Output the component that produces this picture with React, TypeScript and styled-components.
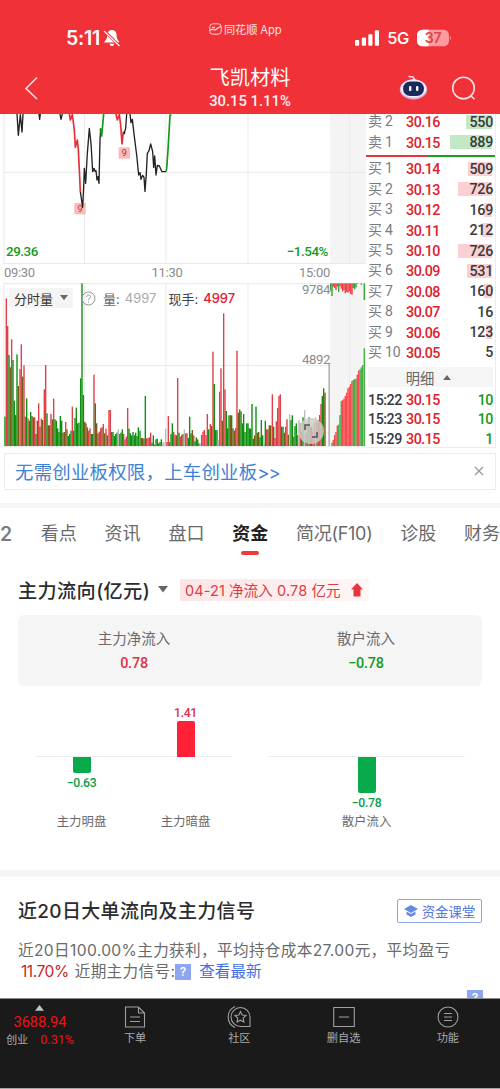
import React from 'react';
import styled, { createGlobalStyle, css } from 'styled-components';

const RED = '#e0202c';
const GREEN = '#159a1c';
const num = css`font-family: Roboto, 'Noto Sans CJK SC', sans-serif;`;

const Global = createGlobalStyle`
  * { box-sizing: border-box; }
  body { margin: 0; background: #fff; }
`;

const Screen = styled.div`
  width: 500px;
  height: 1089px;
  overflow: hidden;
  background: #fff;
  color: #333;
  font-family: Inter, 'Noto Sans CJK SC', sans-serif;
  display: flex;
  flex-direction: column;
  border-bottom: 1px solid #a5a5a5;
  white-space: nowrap;
`;

/* ---------- header ---------- */
const Header = styled.header`
  flex: none;
  height: 114px;
  background: #f13138;
  color: #fff;
`;
const StatusBar = styled.div`
  height: 57px;
  padding: 19px 47px 0 66px;
  display: grid;
  grid-template-columns: 143px 1fr 98px;
`;
const Clock = styled.div`
  display: flex;
  gap: 3px;
  height: 37px;
  align-items: center;
  font-size: 19.6px;
  font-weight: 600;
  letter-spacing: -0.3px;
`;
const AppName = styled.div`
  display: flex;
  gap: 2px;
  height: 20px;
  align-items: center;
  font-size: 11.2px;
  letter-spacing: -0.1px;
  color: #ffe0df;
`;
const Signals = styled.div`
  display: flex;
  height: 37px;
  align-items: center;
  gap: 8px;
  font-size: 16.5px;
  font-weight: 500;
  letter-spacing: -0.3px;
`;
const TitleBar = styled.div`
  height: 57px;
  padding: 0 24px;
  display: grid;
  grid-template-columns: 1fr 86px 1fr;
`;
const BackSlot = styled.div`
  padding-top: 19px;
`;
const StockTitle = styled.div`
  text-align: center;
  strong {
    display: block;
    font-weight: 400;
    font-size: 20.2px;
    line-height: 41px;
  }
  span {
    ${num}
    display: block;
    font-size: 14.8px;
    font-weight: 500;
    line-height: 16px;
    margin-top: -5px;
    color: #fff0f0;
  }
`;
const HeadTools = styled.div`
  display: flex;
  justify-content: flex-end;
  gap: 22px;
  padding-top: 17px;
`;

/* ---------- quote area ---------- */
const Quote = styled.section`
  flex: none;
  height: 335px;
  display: flex;
`;
const Charts = styled.div`
  width: 366px;
  flex: none;
`;
const Pane = styled.div<{ $h: number }>`
  position: relative;
  height: ${p => p.$h}px;
  svg { display: block; }
`;
const RangeRow = styled.div`
  position: absolute;
  left: 6px;
  right: 38px;
  bottom: 2px;
  display: flex;
  justify-content: space-between;
  ${num}
  font-weight: 500;
  font-size: 13.4px;
  letter-spacing: -0.45px;
  line-height: 20px;
  color: ${GREEN};
`;
const TimeRow = styled.div`
  height: 19px;
  padding: 0 36px 0 4px;
  display: grid;
  grid-template-columns: 1fr 1fr 1fr;
  ${num}
  font-size: 13px;
  letter-spacing: -0.3px;
  line-height: 18px;
  color: #8b8b8f;
  span:nth-child(2) { text-align: center; }
  span:nth-child(3) { text-align: right; }
`;
const VolumeBar = styled.div`
  position: absolute;
  left: 9px;
  top: 5px;
  height: 20px;
  display: flex;
  align-items: center;
  font-size: 13px;
  color: #555;
`;
const VolumeSelect = styled.span`
  display: flex;
  align-items: center;
  gap: 7px;
  height: 20px;
  width: 64px;
  padding-left: 5px;
  border-radius: 2px;
  background: rgba(243, 243, 244, 0.95);
  margin-right: 8px;
  color: #333;
`;
const VolText = styled.span<{ $c: string; $ml?: number; $b?: boolean }>`
  color: ${p => p.$c};
  margin-left: ${p => p.$ml ?? 0}px;
  font-weight: ${p => (p.$b ? 500 : 400)};
`;
const Scale = styled.div<{ $top: number }>`
  position: absolute;
  right: 36px;
  top: ${p => p.$top}px;
  ${num}
  font-size: 13.2px;
  letter-spacing: -0.4px;
  line-height: 14px;
  color: #8b8b8f;
`;
const Expand = styled.div`
  position: absolute;
  left: 298px;
  top: 135px;
  width: 26px;
  height: 26px;
  border-radius: 50%;
  background: rgba(205, 205, 200, 0.82);
  display: grid;
  place-items: center;
`;

/* ---------- order book ---------- */
const Book = styled.div`
  width: 130px;
  flex: none;
  padding-left: 2px;
  border-right: 1px solid #ececec;
  border-bottom: 1px solid #ececec;
  height: 334px;
  overflow: hidden;
`;
const BookRows = styled.div`
  margin-top: -2px;
`;
const Level = styled.div`
  height: 20.4px;
  display: flex;
  align-items: center;
  ${num}
  font-size: 14.3px;
  font-weight: 500;
  color: #3a3a3e;
`;
const LevelName = styled.span`
  width: 38px;
  height: 20px;
  line-height: 18px;
  font-size: 14px;
  font-weight: 400;
  color: #7b7b7f;
  letter-spacing: -0.2px;
`;
const Price = styled.span`
  width: 36px;
  color: ${RED};
  letter-spacing: -0.5px;
`;
const Depth = styled.span<{ $w: number; $c: string }>`
  flex: 1;
  margin-right: 2px;
  height: 15px;
  line-height: 15px;
  text-align: right;
  letter-spacing: -0.3px;
  background: linear-gradient(${p => p.$c}, ${p => p.$c}) no-repeat right 1px top 0 / ${p => p.$w}px 14px;
`;
const Split = styled.div`
  height: 2px;
  margin: 2px 0 2.5px -2px;
  width: 129px;
  background: linear-gradient(90deg, #e5323b 48%, #17a020 48%);
`;
const DetailHead = styled.div`
  height: 20px;
  margin: 4px 2px 3px 0;
  padding-right: 4px;
  background: #f5f5f6;
  display: flex;
  align-items: center;
  justify-content: center;
  gap: 9px;
  font-size: 14.3px;
  color: #666;
`;
const Trade = styled.div`
  height: 19.4px;
  display: flex;
  align-items: center;
  ${num}
  font-size: 14.3px;
  font-weight: 500;
  color: #3a3a3e;
  letter-spacing: -0.5px;
  > span:first-child { width: 38px; }
  > span:last-child { flex: 1; text-align: right; margin-right: 2px; color: ${GREEN}; }
`;

/* ---------- banner & tabs ---------- */
const Banner = styled.div`
  flex: none;
  margin: 4px 4px 0;
  height: 37px;
  border: 1.5px solid #ececef;
  padding: 0 11px 1px 10px;
  display: flex;
  align-items: center;
  justify-content: space-between;
  font-size: 18.4px;
  letter-spacing: 0.25px;
  color: #3f82d4;
`;
const More = styled.span`
  letter-spacing: -1px;
`;
const Gap = styled.div<{ $mt: number; $h: number }>`
  flex: none;
  margin-top: ${p => p.$mt}px;
  height: ${p => p.$h}px;
  background: #f5f5f6;
`;
const Tabs = styled.nav`
  flex: none;
  height: 52px;
  display: flex;
  gap: 27.8px;
  line-height: 52px;
  font-size: 18px;
  color: #6a6a6c;
`;
const Tab = styled.span<{ $on?: boolean; $tight?: boolean }>`
  flex: none;
  height: 47px;
  position: relative;
  ${p => p.$tight && css`letter-spacing: -0.28px;`}
  ${p => p.$on && css`
    color: #222;
    font-weight: 700;
    &::after {
      content: '';
      position: absolute;
      left: 9px;
      bottom: 0;
      width: 18px;
      height: 4px;
      border-radius: 2px;
      background: #f13a38;
    }
  `}
`;
const ClippedTab = styled(Tab)`
  width: 13px;
  font-weight: 600;
  font-size: 19.5px;
  color: #7c7c7e;
`;

/* ---------- fund flow ---------- */
const FlowHead = styled.div`
  flex: none;
  height: 55px;
  padding: 11px 0 7px 18px;
  display: flex;
  align-items: center;
`;
const FlowTitle = styled.h2`
  margin: 0;
  width: 131px;
  font-size: 19.2px;
  letter-spacing: 0.35px;
  font-weight: 500;
  color: #2c2c2e;
  margin-right: 9px;
`;
const FlowTag = styled.div`
  margin-left: 12px;
  width: 189px;
  height: 22px;
  padding-left: 5px;
  display: flex;
  align-items: center;
  gap: 10px;
  background: linear-gradient(90deg, #fde5e6, #fff6f6);
  color: #df3c43;
  font-size: 14.5px;
  letter-spacing: 0.1px;
`;
const Summary = styled.div`
  flex: none;
  margin: 0 18px;
  height: 71px;
  border-radius: 6px;
  background: #f5f5f6;
  display: grid;
  grid-template-columns: 1fr 1fr;
  text-align: center;
  padding-top: 12px;
`;
const SummaryCell = styled.div<{ $c: string }>`
  font-size: 14.5px;
  line-height: 23px;
  color: #6a6a6c;
  b {
    ${num}
    display: block;
    font-size: 14.4px;
    letter-spacing: -0.2px;
    font-weight: 500;
    line-height: 28px;
    color: ${p => p.$c};
  }
`;
const BarChart = styled.div`
  flex: none;
  height: 184px;
  display: flex;
  padding: 0 35px;
  justify-content: space-between;
`;
const BarGroup = styled.div`
  width: 197px;
  display: flex;
  justify-content: center;
  background: linear-gradient(#eee, #eee) no-repeat 0 70px / 100% 1px;
`;
const BarItem = styled.div`
  flex: none;
  width: 104px;
  display: grid;
  grid-template-rows: 71px 55px 20px;
  justify-items: center;
  font-size: 12.4px;
  color: #6a6a6c;
  line-height: 20px;
`;
const BarHalf = styled.div<{ $up?: boolean; $c: string }>`
  display: flex;
  flex-direction: column;
  align-items: center;
  justify-content: ${p => (p.$up ? 'flex-end' : 'flex-start')};
  ${num}
  font-size: 12.2px;
  letter-spacing: -0.3px;
  font-weight: 500;
  line-height: ${p => (p.$up ? 16 : 21)}px;
  color: ${p => p.$c};
`;
const Bar = styled.i<{ $h: number; $up?: boolean }>`
  flex: none;
  width: 18px;
  height: ${p => p.$h}px;
  background: ${p => (p.$up ? '#ff2236' : '#08aa4c')};
  border-radius: ${p => (p.$up ? '2px 2px 0 0' : '0 0 2px 2px')};
`;

/* ---------- signals ---------- */
const SignalSection = styled.section`
  flex: none;
  height: 122px;
  padding: 21px 18px 0 18px;
  overflow: hidden;
  border-bottom: 1px solid #8b8b8b;
`;
const SignalHead = styled.div`
  display: flex;
  justify-content: space-between;
  align-items: center;
  height: 25px;
  h2 { margin: -3px 0 0; font-size: 19px; letter-spacing: 0.33px; font-weight: 500; color: #2c2c2e; }
`;
const ClassButton = styled.button`
  width: 85px;
  height: 24px;
  padding: 0;
  border: 1px solid #8ba4e6;
  border-radius: 2px;
  background: #fff;
  display: flex;
  align-items: center;
  justify-content: center;
  gap: 4px;
  font: 13.4px 'Noto Sans CJK SC', sans-serif;
  color: #5578dd;
`;
const Summary20 = styled.p`
  margin: 18px 0 0;
  font-size: 15.6px;
  letter-spacing: 0.36px;
  line-height: 20.5px;
  color: #6a6a6c;
`;
const Line = styled.span`
  display: flex;
  align-items: center;
  height: 20.5px;
  em { font-style: normal; color: #c81f28; margin: 0 6px 0 3px; letter-spacing: -0.5px; }
  a { color: #3f6fe8; margin-left: 8px; letter-spacing: 0; }
`;
const HelpBadge = styled.span`
  flex: none;
  width: 16px;
  height: 16px;
  background: #8ea6f2;
  color: #fff;
  font-size: 12px;
  font-weight: 600;
  line-height: 16px;
  text-align: center;
`;
const TrailingRow = styled.div`
  display: flex;
  justify-content: flex-end;
  margin: 8px -1px 0 0;
`;

/* ---------- bottom bar ---------- */
const BottomBar = styled.footer`
  flex: 1;
  background: #1a1a1a;
  color: #a9a9a9;
  display: flex;
`;
const IndexBox = styled.div`
  width: 83px;
  padding-top: 6px;
  display: flex;
  flex-direction: column;
  align-items: center;
  padding-right: 3px;
  ${num}
  color: #ee1118;
  b { font-size: 14.8px; font-weight: 400; line-height: 20px; margin-top: 1px; letter-spacing: -0.1px; }
  div { display: flex; gap: 12px; font-size: 12.6px; line-height: 15px; }
  small { font-size: 11.2px; color: #a9a9a9; line-height: 17px; }
`;
const NavItem = styled.div`
  width: 104.3px;
  padding-top: 7px;
  display: flex;
  flex-direction: column;
  align-items: center;
  font-size: 11.2px;
  line-height: 17px;
  svg { margin-bottom: 2px; }
`;

type Hue = 'r' | 'g' | 'b' | 'y';
const HUES: Record<Hue, string> = { r: '#df4148', g: '#109010', b: '#7d5c18', y: '#bdbdbd' };

/* Minute volumes: x position, colour key, bar top (three units per pixel). */
const VOLUME =
  '15g410 19r55 23r138 27g225 31b262 35r178 39g240 43g362 47g405 51g223 55b318 60r267 64r193 68b290 72r256 76r410 80g355 84r415 88b422 92g396 96b408 100b412 104r412 108g462 112b422 116r370 120b440 124r416 128b420 133r328 137r255 141g400 145b436 149b436 153r402 157b418 161r356 165g418 169g422 173g445 177g456 181g408 185g422 189b458 193b456 197r426 201b448 205g468 209g462 213g452 217r380 221b452 225g414 229g383 233g430 237g428 242g295 246g10 250g345 254b425 258b430 262b442 266r452 270r445 274g462 278g462 282r284 286g370 290b430 294b460 298r455 302r445 306b442 310r432 314b460 318r446 322g466 327r390 331r390 335b456 339g456 343g468 347g462 351g458 355y448 359r462 363g458 367g448 371r462 375r478 379r470 383r384 387g446 391g460 395g466 399g456 403g466 407g458 411g468 415g442 420g452 424b474 428b474 432b476 436g348 440r475 444r474 448r472 452r458 456g488 460g466 464g494 468g478 472g476 476g490 480g486 484g478 488y488 492y486 497y446 501r486 505r408 509r486 513g462 517g430 521r456 525r464 529b466 533r294 537g458 541r470 545r465 549b462 553y448 557r460 561r460 565g474 569g410 573g460 577b450 581r466 585g484 589g472 593g478 597g490 601y490 605r465 609r455 613r450 618r465 622r402 626g448 631r432 635b438 639r215 643g312 647g450 651g450 655y480 659r335 663r265 667b422 671r100 675r328 679g393 683g445 687g406 691b406 695g406 699b445 703b452 707r444 711r212 715b398 719b388 723g394 727g430 731g402 735g456 740g430 744g430 748g445 752g446 756g372 760g476 764b466 768g380 772b458 776b456 780g472 784g420 788g466 792y490 796g422 800r448 804b448 808b436 812b436 817r343 821g440 825r474 829r424 833r384 837r348 841r343 845g440 849g440 853b458 857r440 861r418 865b464 869y402 873g420 877g406 881r470 885g438 889g430 893r465 897y420 901r430 905g455 909g412 914y390 918g460 922r430 927g412 931r440 935g440 939r455 943r430 947y412 951g425 955r420 959r405 963r372 967g348 971g325 975b338';

const parse = (s: string) =>
  s.split(' ').map(t => {
    const m = /^(\d+)([rgby])(\d+)$/.exec(t)!;
    return { x: +m[1], hue: m[2] as Hue, top: +m[3] };
  });

const AUCTION =
  '996g488 1000r480 1004r465 1008r456 1012r437 1016g434 1020g405 1024g363 1028r360 1032r356 1036r348 1040r338 1044r325 1048r320 1052r312 1056r303 1060g300 1064g297 1068g296 1072r284 1076r272 1080g268 1084g262 1088g255 1093g205';
const AUCTION_TOP =
  '992g32 996g48 1000r20 1004r24 1008r30 1012r20 1016g36 1020r18 1024r26 1028r34 1032r30 1036r40 1040r36 1044r38 1048r34 1052r42 1056r44 1060g24 1064g28 1068g22 1072g12 1084g14 1093g60';

const VolumeChart = () => (
  <svg width="366" height="167" viewBox="0 9 1098 501">
    <rect x="990" y="9" width="108" height="489" fill="#f4f4f4" />
    <g stroke="#e9e9e9" strokeWidth="3">
      <path d="M12 11H1098M12 257H990M12 10V498M254 10V498M498 10V498M744 10V498M12 500H1098M1048 10V498" fill="none" />
    </g>
    {parse(VOLUME).map(b => (
      <rect key={b.x} x={b.x - 2.1} y={b.top} width="4.2" height={498 - b.top} fill={HUES[b.hue]} />
    ))}
    <rect x="985" y="248" width="5" height="250" fill="#b5b5b5" />
    {parse(AUCTION).map(b => (
      <rect key={b.x} x={b.x - 2.2} y={b.top} width="4.4" height={498 - b.top} fill={b.hue === 'r' ? '#fa4b50' : '#4aae4a'} />
    ))}
    {parse(AUCTION_TOP).map(b => (
      <rect key={b.x} x={b.x - 2.2} y="10" width="4.4" height={b.top - 10} fill={b.hue === 'r' ? '#f1444a' : '#3ba33b'} />
    ))}
  </svg>
);

const PriceChart = () => (
  <svg width="366" height="150" viewBox="0 12 1098 450">
    <rect x="990" y="12" width="108" height="450" fill="#f4f4f4" />
    <path d="M12 12V462M254 12V462M498 12V462M744 12V462M12 187H1098M12 460.500H1098M1048 12V462" stroke="#e9e9e9" strokeWidth="3" fill="none" />
    <rect x="223" y="279" width="34" height="34" fill="#f9babd" />
    <rect x="356" y="112" width="34" height="34" fill="#f9babd" />
    <g fill="none" strokeWidth="4" strokeLinejoin="round">
      <path stroke="#222" d="M51 12L55 76L61 14L66 66L69 12M117 12L119 28L121 12M180 12L183 28L187 12" />
      <path stroke="#e62f38" strokeWidth="5" d="M208 12L211 30L217 14L223 60L226 112L232 90L235 118L238 180L241 245" />
      <path stroke="#222" d="M241 245L248 292L251 230L253 175L257 220L262 130L268 55L273 100L278 185L282 175L285 184L288 182L291 210L294 200L297 220L300 90L302 55" />
      <path stroke="#12991b" strokeWidth="5" d="M301 56L305 78L311 12" />
      <path stroke="#e62f38" strokeWidth="5" d="M348 12L352 30L358 14L362 45L366 102L370 66L375 72" />
      <path stroke="#222" d="M372 72L377 55L380 12M390 12L393 38L397 28L403 80L410 135L416 195L420 188L423 208L428 196L432 202L435 244L439 190L442 130L447 122L452 102L458 125L461 172L464 138L468 195L472 166L478 168L486 185L498 185" />
      <path stroke="#12991b" strokeWidth="5" d="M498 185L500 176L504 120L510 16L514 14" />
    </g>
    <g fill="#bb3038" fontFamily="Roboto, sans-serif" fontSize="27" textAnchor="middle">
      <text x="240" y="306">9</text>
      <text x="373" y="139">9</text>
    </g>
  </svg>
);

const Caret = ({ up, size = 8, color = '#666' }: { up?: boolean; size?: number; color?: string }) => (
  <svg width={size} height={size * 0.65} viewBox="0 0 10 6.500">
    <path d={up ? 'M0 6.500L5 0L10 6.500Z' : 'M0 0H10L5 6.500Z'} fill={color} />
  </svg>
);

const levels: [string, string, number, number, boolean][] = [
  ['卖 2', '30.16', 550, 26, true],
  ['卖 1', '30.15', 889, 42, true],
  ['买 1', '30.14', 509, 24, false],
  ['买 2', '30.13', 726, 34, false],
  ['买 3', '30.12', 169, 8, false],
  ['买 4', '30.11', 212, 10, false],
  ['买 5', '30.10', 726, 34, false],
  ['买 6', '30.09', 531, 25, false],
  ['买 7', '30.08', 160, 8, false],
  ['买 8', '30.07', 16, 0, false],
  ['买 9', '30.06', 123, 6, false],
  ['买 10', '30.05', 5, 0, false],
];

const LevelRow = ({ row }: { row: (typeof levels)[number] }) => (
  <Level>
    <LevelName>{row[0]}</LevelName>
    <Price>{row[1]}</Price>
    <Depth $w={row[3]} $c={row[4] ? '#c3e8c5' : '#fad0d2'}>{row[2]}</Depth>
  </Level>
);

const iconProps = { fill: 'none', stroke: '#a0a0a0', strokeWidth: 1.1 } as const;

export default function App() {
  return (
    <Screen>
      <Global />
      <Header>
        <StatusBar>
          <Clock>
            5:11
            <svg width="18" height="18" viewBox="0 0 18 18">
              <path d="M9 1C5.800 1 4.400 3.500 4.300 6.200C4.200 9.500 3 10.800 1.500 12.600V13.500H16V12.600C14.500 10.800 13.700 9.500 13.600 6.200C13.500 3.500 12.200 1 9 1Z" fill="#fff" />
              <path d="M6.500 14.700H11.300C11 16.200 10 17 9 17S6.800 16.200 6.500 14.700Z" fill="#fff" />
              <path d="M1 1.500L16.500 17" stroke="#f13138" strokeWidth="3" />
              <path d="M1 2L16.500 17" stroke="#fff" strokeWidth="1.200" />
            </svg>
          </Clock>
          <AppName>
            <svg width="13" height="12" viewBox="0 0 13 12" fill="none" stroke="#ffd0cf">
              <rect x="0.800" y="0.800" width="11.400" height="10.400" rx="3" />
              <path d="M1 7.500C4 4.500 5 8.500 7 6.500S10 4.500 12 3.500M3 4.500H6" strokeWidth="1.300" />
            </svg>
            同花顺 App
          </AppName>
          <Signals>
            <svg width="25" height="16" viewBox="0 0 25 16" fill="#fff">
              <rect y="10" width="4.300" height="6" rx="1" />
              <rect x="7" y="7.500" width="4.300" height="8.500" rx="1" />
              <rect x="13.700" y="4" width="4.300" height="12" rx="1" />
              <rect x="20.500" width="4.300" height="16" rx="1" />
            </svg>
            5G
            <svg width="37" height="18" viewBox="0 0 37 18">
              <rect x="0" y="0.500" width="33" height="17" rx="5.500" fill="#ff9b9e" />
              <path d="M5.500 0.500H12V17.500H5.500A5.500 5.500 0 0 1 0 12V6A5.500 5.500 0 0 1 5.500 0.500Z" fill="#fff" />
              <path d="M34 6.500Q36 9 34 11.500Z" fill="#ff9b9e" />
              <text x="16.500" y="14.300" fontSize="14.500" fontWeight="600" textAnchor="middle" fill="#d8474e" fontFamily="Inter, sans-serif">37</text>
            </svg>
          </Signals>
        </StatusBar>
        <TitleBar>
          <BackSlot>
            <svg width="14" height="24" viewBox="0 0 14 24" fill="none" stroke="#ffe6e6" strokeWidth="1.500">
              <path d="M13 1.500L2 12.500L13 23" />
            </svg>
          </BackSlot>
          <StockTitle>
            <strong>飞凯材料</strong>
            <span>30.15 1.11%</span>
          </StockTitle>
          <HeadTools>
            <svg width="29" height="27" viewBox="0 0 29 27">
              <path d="M9.500 2.500L14 3L16 6" stroke="#f4dcec" strokeWidth="1.600" fill="none" />
              <ellipse cx="14.500" cy="15.500" rx="13.700" ry="10" fill="#dcb4de" />
              <ellipse cx="14.500" cy="14.500" rx="12.800" ry="9.300" fill="#f8ecfa" />
              <rect x="4" y="7.500" width="21" height="14.500" rx="7.250" fill="#1b2a5c" />
              <rect x="10" y="12" width="2.400" height="5" rx="1" fill="#fff" />
              <rect x="17" y="12" width="2.400" height="5" rx="1" fill="#fff" />
            </svg>
            <svg width="26" height="27" viewBox="0 0 26 27" fill="none" stroke="#ffe6e6" strokeWidth="1.500">
              <circle cx="13.500" cy="14" r="10.800" />
              <path d="M20.500 21.500L24.500 25.300" />
            </svg>
          </HeadTools>
        </TitleBar>
      </Header>

      <Quote>
        <Charts>
          <Pane $h={150}>
            <PriceChart />
            <RangeRow><span>29.36</span><span>−1.54%</span></RangeRow>
          </Pane>
          <TimeRow><span>09:30</span><span>11:30</span><span>15:00</span></TimeRow>
          <Pane $h={166}>
            <VolumeChart />
            <VolumeBar>
              <VolumeSelect>分时量 <Caret /></VolumeSelect>
              <svg width="15" height="15" viewBox="0 0 15 15" fill="none" stroke="#999">
                <circle cx="7.500" cy="7.500" r="6.500" />
                <path d="M5.500 6C5.500 3.300 9.500 3.400 9.500 5.800C9.500 7.200 7.500 7.300 7.500 9M7.500 10.300V11.500" />
              </svg>
              <VolText $c="#666" $ml={7}>量:</VolText>
              <VolText $c="#aaa" $ml={5}>4997</VolText>
              <VolText $c="#444" $ml={12}>现手:</VolText>
              <VolText $c={RED} $ml={5} $b>4997</VolText>
            </VolumeBar>
            <Scale $top={0}>9784</Scale>
            <Scale $top={70}>4892</Scale>
            <Expand>
              <svg width="14" height="14" viewBox="0 0 14 14" fill="none" stroke="#555" strokeWidth="1.600">
                <path d="M1 6V1H6M13 8V13H8" />
              </svg>
            </Expand>
          </Pane>
        </Charts>
        <Book>
          <BookRows>
            {levels.slice(0, 2).map(r => <LevelRow key={r[0]} row={r} />)}
            <Split />
            {levels.slice(2).map(r => <LevelRow key={r[0]} row={r} />)}
            <DetailHead>明细 <Caret up /></DetailHead>
            <Trade><span>15:22</span><Price>30.15</Price><span>10</span></Trade>
            <Trade><span>15:23</span><Price>30.15</Price><span>10</span></Trade>
            <Trade><span>15:29</span><Price>30.15</Price><span>1</span></Trade>
          </BookRows>
        </Book>
      </Quote>

      <Banner>
        <span>无需创业板权限，上车创业板<More>&gt;&gt;</More></span>
        <svg width="10" height="10" viewBox="0 0 10 10" stroke="#999" strokeWidth="1.200"><path d="M1 1L9 9M9 1L1 9" /></svg>
      </Banner>
      <Gap $mt={13} $h={5} />

      <Tabs>
        <ClippedTab>2</ClippedTab>
        <Tab>看点</Tab>
        <Tab>资讯</Tab>
        <Tab>盘口</Tab>
        <Tab $on>资金</Tab>
        <Tab $tight>简况(F10)</Tab>
        <Tab>诊股</Tab>
        <Tab>财务</Tab>
      </Tabs>

      <FlowHead>
        <FlowTitle>主力流向(亿元)</FlowTitle>
        <Caret size={10} />
        <FlowTag>
          04-21 净流入 0.78 亿元
          <svg width="12" height="14" viewBox="0 0 12 14" fill="#e5383d"><path d="M6 0L12 6.500H9.500V13.500H2.500V6.500H0Z" /></svg>
        </FlowTag>
      </FlowHead>

      <Summary>
        <SummaryCell $c="#dc3440">主力净流入<b>0.78</b></SummaryCell>
        <SummaryCell $c={GREEN}>散户流入<b>−0.78</b></SummaryCell>
      </Summary>

      <BarChart>
        <BarGroup>
          <BarItem>
            <BarHalf $up $c="#e0304a" />
            <BarHalf $c="#0a9d48"><Bar $h={16} />−0.63</BarHalf>
            主力明盘
          </BarItem>
          <BarItem>
            <BarHalf $up $c="#e0304a">1.41<Bar $up $h={36} /></BarHalf>
            <BarHalf $c="#0a9d48" />
            主力暗盘
          </BarItem>
        </BarGroup>
        <BarGroup>
          <BarItem>
            <BarHalf $up $c="#e0304a" />
            <BarHalf $c="#0a9d48"><Bar $h={36} />−0.78</BarHalf>
            散户流入
          </BarItem>
        </BarGroup>
      </BarChart>
      <Gap $mt={0} $h={7} />

      <SignalSection>
        <SignalHead>
          <h2>近20日大单流向及主力信号</h2>
          <ClassButton>
            <svg width="14" height="12" viewBox="0 0 14 12" fill="#6488e4"><path d="M7 0L14 4L7 8L0 4ZM2.500 6.500L7 9L11.500 6.500V9.500L7 12L2.500 9.500Z" /></svg>
            资金课堂
          </ClassButton>
        </SignalHead>
        <Summary20>
          <Line>近20日100.00%主力获利，平均持仓成本27.00元，平均盈亏</Line>
          <Line><em>11.70%</em>近期主力信号:<HelpBadge>?</HelpBadge><a>查看最新</a></Line>
        </Summary20>
        <TrailingRow><HelpBadge>?</HelpBadge></TrailingRow>
      </SignalSection>

      <BottomBar>
        <IndexBox>
          <Caret up size={9} color="#c4c4c4" />
          <b>3688.94</b>
          <div><small>创业</small>0.31%</div>
        </IndexBox>
        <NavItem>
          <svg width="22" height="22" viewBox="0 0 22 22" {...iconProps}><path d="M1.500 1H14.500L20.500 7V21H1.500ZM14.500 1V7H20.500M6 11H16M6 15.500H16" /></svg>
          下单
        </NavItem>
        <NavItem>
          <svg width="24" height="22" viewBox="0 0 24 22" {...iconProps}>
            <path d="M13.500 1.500A9.500 9.500 0 0 0 13.500 20.500H23V11A9.500 9.500 0 0 0 13.500 1.500ZM8 0.500A11.500 11.500 0 0 0 8 21.500" />
            <path d="M13.500 5.500L15.200 9L19 9.500L16.200 12.200L16.900 16L13.500 14.200L10.100 16L10.800 12.200L8 9.500L11.800 9Z" />
          </svg>
          社区
        </NavItem>
        <NavItem>
          <svg width="22" height="22" viewBox="0 0 22 22" {...iconProps}><path d="M0.700 1.500H21.300V20.500H0.700ZM6 11H16" /></svg>
          删自选
        </NavItem>
        <NavItem>
          <svg width="22" height="22" viewBox="0 0 22 22" {...iconProps}><circle cx="11" cy="11" r="10" /><path d="M7 7.500H15M7 11H15M7 14.500H15" /></svg>
          功能
        </NavItem>
      </BottomBar>
    </Screen>
  );
}
